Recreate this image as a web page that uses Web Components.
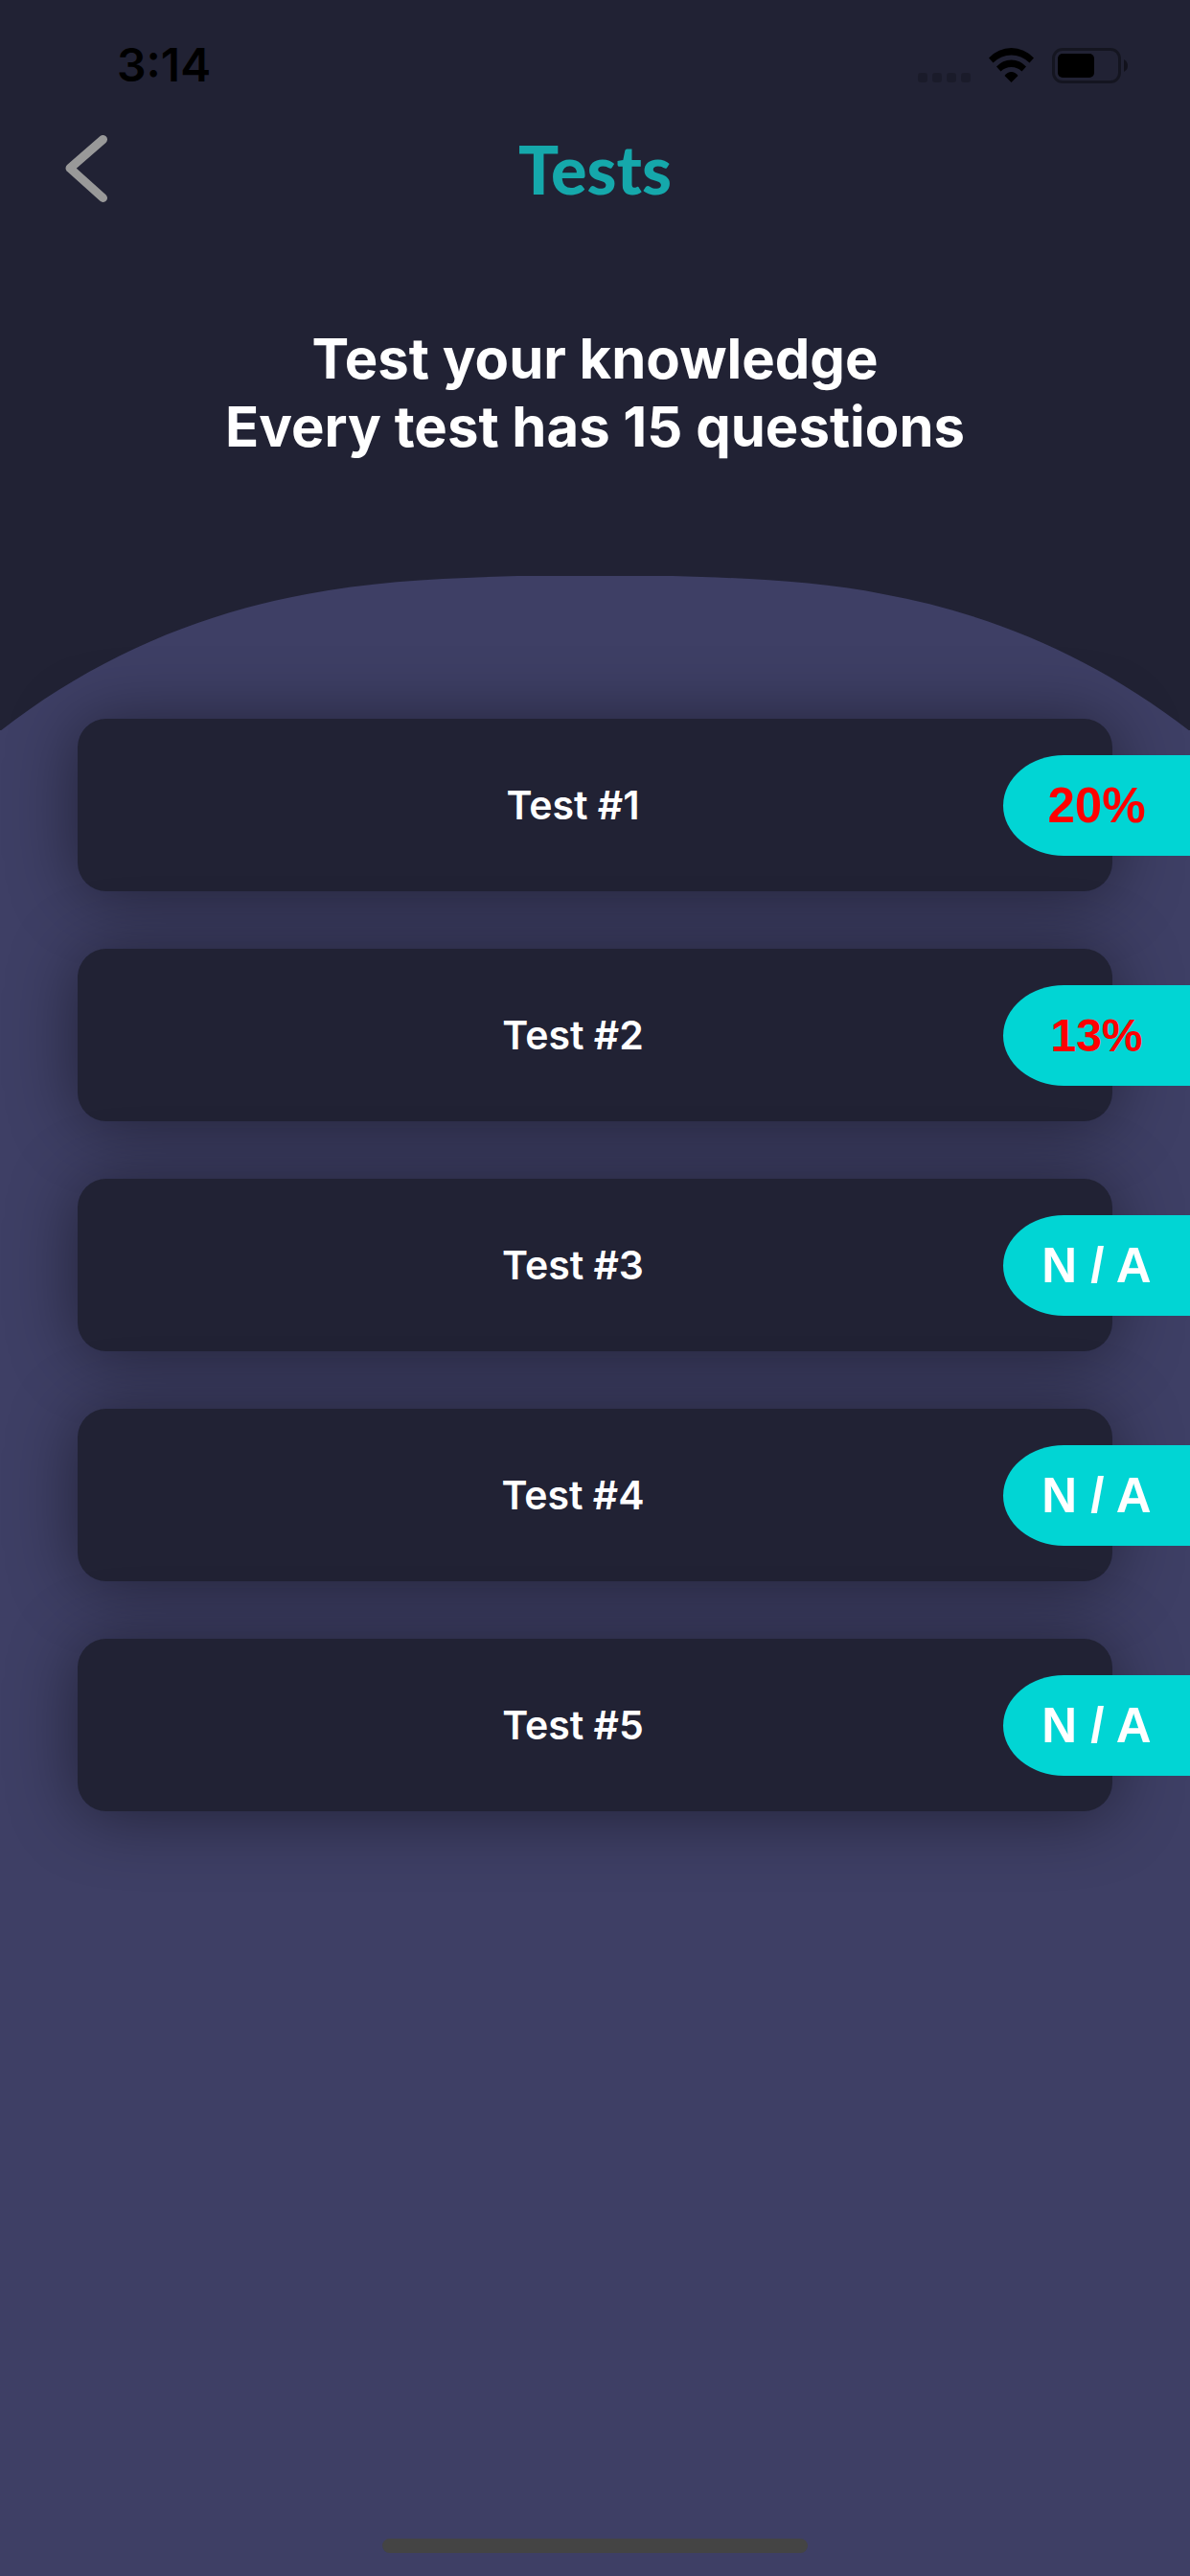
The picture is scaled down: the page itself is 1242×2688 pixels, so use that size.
<!DOCTYPE html>
<html lang="en">
<head>
<meta charset="utf-8">
<meta name="viewport" content="width=device-width, initial-scale=1">
<title>Tests</title>
<style>
  :root {
    --ink: #212234;
    --dusk: #3e3f65;
    --aqua: #01d5d4;
    --teal: #15a8ab;
    --gutter: 81px;
  }

  body {
    margin: 0;
    background: var(--ink);
    color: #fff;
    font-family: Inter, "Liberation Sans", sans-serif;
  }
</style>
</head>
<body>
<tests-screen>
  <status-bar slot="status" time="3:14"></status-bar>
  <nav-header slot="header">Tests</nav-header>
  <intro-text slot="intro">
    <span>Test your knowledge</span>
    <span slot="detail">Every test has 15 questions</span>
  </intro-text>
  <test-card score="20%" size="large" failed>Test #1</test-card>
  <test-card score="13%" failed>Test #2</test-card>
  <test-card score="N / A" size="large">Test #3</test-card>
  <test-card score="N / A" size="large">Test #4</test-card>
  <test-card score="N / A" size="large">Test #5</test-card>
</tests-screen>

<script>
const html = markup => {
  const template = document.createElement('template')
  template.innerHTML = markup
  return template
}

class BaseElement extends HTMLElement {
  constructor () {
    super()
    this.attachShadow({ mode: 'open' })
    this.shadowRoot.appendChild(this.constructor.template.content.cloneNode(true))
  }
}

class StatusBar extends BaseElement {
  static template = html(`
    <style>
      :host {
        display: flex;
        align-items: center;
        justify-content: space-between;
        height: 136px;
        padding: 0 65px 0 122px;
        color: #000;
      }
      time {
        font-size: 48px;
        font-weight: 600;
        line-height: 56px;
      }
      .icons {
        display: flex;
        align-items: center;
        gap: 19px;
      }
      svg { display: block; }
    </style>
    <time></time>
    <div class="icons">
      <svg width="55" height="37" viewBox="0 0 55 37" opacity=".18" role="img" aria-label="No signal">
        <rect x="0" y="26" width="10" height="10" rx="3"/>
        <rect x="15" y="26" width="10" height="10" rx="3"/>
        <rect x="30" y="26" width="10" height="10" rx="3"/>
        <rect x="45" y="26" width="10" height="10" rx="3"/>
      </svg>
      <svg width="47" height="37" viewBox="0 0 47 37" role="img" aria-label="Wi-Fi">
        <path d="M0 10.500 Q10 0 23.500 0 T47 10.500 L42.500 15.500 Q34 7.500 23.500 7.500 T4.500 15.500 Z"/>
        <path d="M8 19.500 Q14.500 12.500 23.500 12.500 T39 19.500 L34.500 24.500 Q30 20 23.500 20 T12.500 24.500 Z"/>
        <path d="M16.500 29 Q19.500 25 23.500 25 T30.500 29 L23.500 36 Z"/>
      </svg>
      <svg width="79" height="37" viewBox="0 0 79 37" role="img" aria-label="Battery">
        <rect x="1.500" y="1.500" width="69" height="34" rx="9.500" fill="none" stroke="#000" stroke-width="3" opacity=".38"/>
        <rect x="6" y="6" width="38" height="25" rx="5"/>
        <path d="M75 12 Q79 14 79 18.500 T75 25 Z" opacity=".45"/>
      </svg>
    </div>
  `)

  static get observedAttributes () {
    return ['time']
  }

  attributeChangedCallback (name, previous, value) {
    this.shadowRoot.querySelector('time').textContent = value
  }
}

class NavHeader extends BaseElement {
  static template = html(`
    <style>
      :host {
        display: grid;
        grid-template-columns: 96px 1fr 96px;
        align-items: center;
        height: 80px;
        padding: 0 40px;
      }
      button {
        width: 96px;
        height: 80px;
        margin: 0;
        padding: 0 0 0 28px;
        border: 0;
        background: none;
        color: #999;
        cursor: pointer;
      }
      svg { display: block; }
      h1 {
        margin: 0;
        color: var(--teal);
        font-family: Lato, sans-serif;
        font-size: 70px;
        font-weight: 900;
        line-height: 80px;
        text-align: center;
      }
    </style>
    <button type="button" aria-label="Back">
      <svg width="44" height="70" viewBox="0 0 44 70" fill="none" stroke="currentColor" stroke-width="9" stroke-linecap="round" stroke-linejoin="round">
        <path d="M39.500 4.500 L5 34.500 L39.500 65.500"/>
      </svg>
    </button>
    <h1><slot></slot></h1>
  `)
}

class IntroText extends BaseElement {
  static template = html(`
    <style>
      :host {
        display: block;
        padding: 123px 40px 120px;
        font-size: 58px;
        font-weight: 700;
        line-height: 71px;
        text-align: center;
      }
      p { margin: 0; }
    </style>
    <p><slot></slot></p>
    <p><slot name="detail"></slot></p>
  `)
}

class TestCard extends BaseElement {
  static template = html(`
    <style>
      :host {
        display: block;
        position: relative;
      }
      button {
        display: block;
        width: 100%;
        height: 180px;
        margin: 0;
        padding: 0 46px 0 0;
        border: 0;
        border-radius: 30px;
        background: var(--ink);
        box-shadow: 0 4px 72px rgba(0, 0, 0, .46);
        color: inherit;
        font: inherit;
        font-size: 41px;
        font-weight: 600;
        text-align: center;
        cursor: pointer;
      }
      /* the score tab runs past the card to the edge of the screen */
      output {
        position: absolute;
        top: 38px;
        right: calc(var(--gutter) * -1);
        width: 195px;
        height: 105px;
        border-radius: 64px 0 0 64px / 53px 0 0 53px;
        background: var(--aqua);
        font-family: "Liberation Sans", sans-serif;
        font-size: 48px;
        font-weight: 700;
        line-height: 105px;
        text-align: center;
        pointer-events: none;
      }
      :host([size="large"]) output { font-size: 51px; }
      :host([failed]) output { color: #f00; }
    </style>
    <button type="button"><slot></slot></button>
    <output></output>
  `)

  static get observedAttributes () {
    return ['score']
  }

  attributeChangedCallback (name, previous, value) {
    this.shadowRoot.querySelector('output').textContent = value
  }
}

class TestsScreen extends BaseElement {
  static template = html(`
    <style>
      :host {
        display: flex;
        flex-direction: column;
        min-height: 100vh;
        overflow: hidden;
      }
      main {
        display: flex;
        flex: 1;
        flex-direction: column;
        position: relative;
        background: linear-gradient(transparent 161px, var(--dusk) 161px);
      }
      .hill {
        position: absolute;
        top: 0;
        left: 0;
        width: 100%;
        height: 162px;
        fill: var(--dusk);
      }
      .list {
        display: flex;
        flex: 1;
        flex-direction: column;
        gap: 60px;
        position: relative;
        padding: 149px var(--gutter) 60px;
      }
      .home {
        align-self: center;
        width: 444px;
        max-width: 60%;
        height: 15px;
        margin-bottom: 24px;
        border-radius: 8px;
        background: #444;
      }
    </style>
    <slot name="status"></slot>
    <slot name="header"></slot>
    <slot name="intro"></slot>
    <main>
      <svg class="hill" viewBox="0 0 1242 162" preserveAspectRatio="none" aria-hidden="true">
        <path d="M0 162 C100 84 210 39 320 19 C390 5 470 2 540 0 H702 C772 2 852 5 922 19 C1032 39 1142 84 1242 162 Z"/>
      </svg>
      <div class="list"><slot></slot></div>
      <div class="home"></div>
    </main>
  `)
}

customElements.define('status-bar', StatusBar)
customElements.define('nav-header', NavHeader)
customElements.define('intro-text', IntroText)
customElements.define('test-card', TestCard)
customElements.define('tests-screen', TestsScreen)
</script>
</body>
</html>
